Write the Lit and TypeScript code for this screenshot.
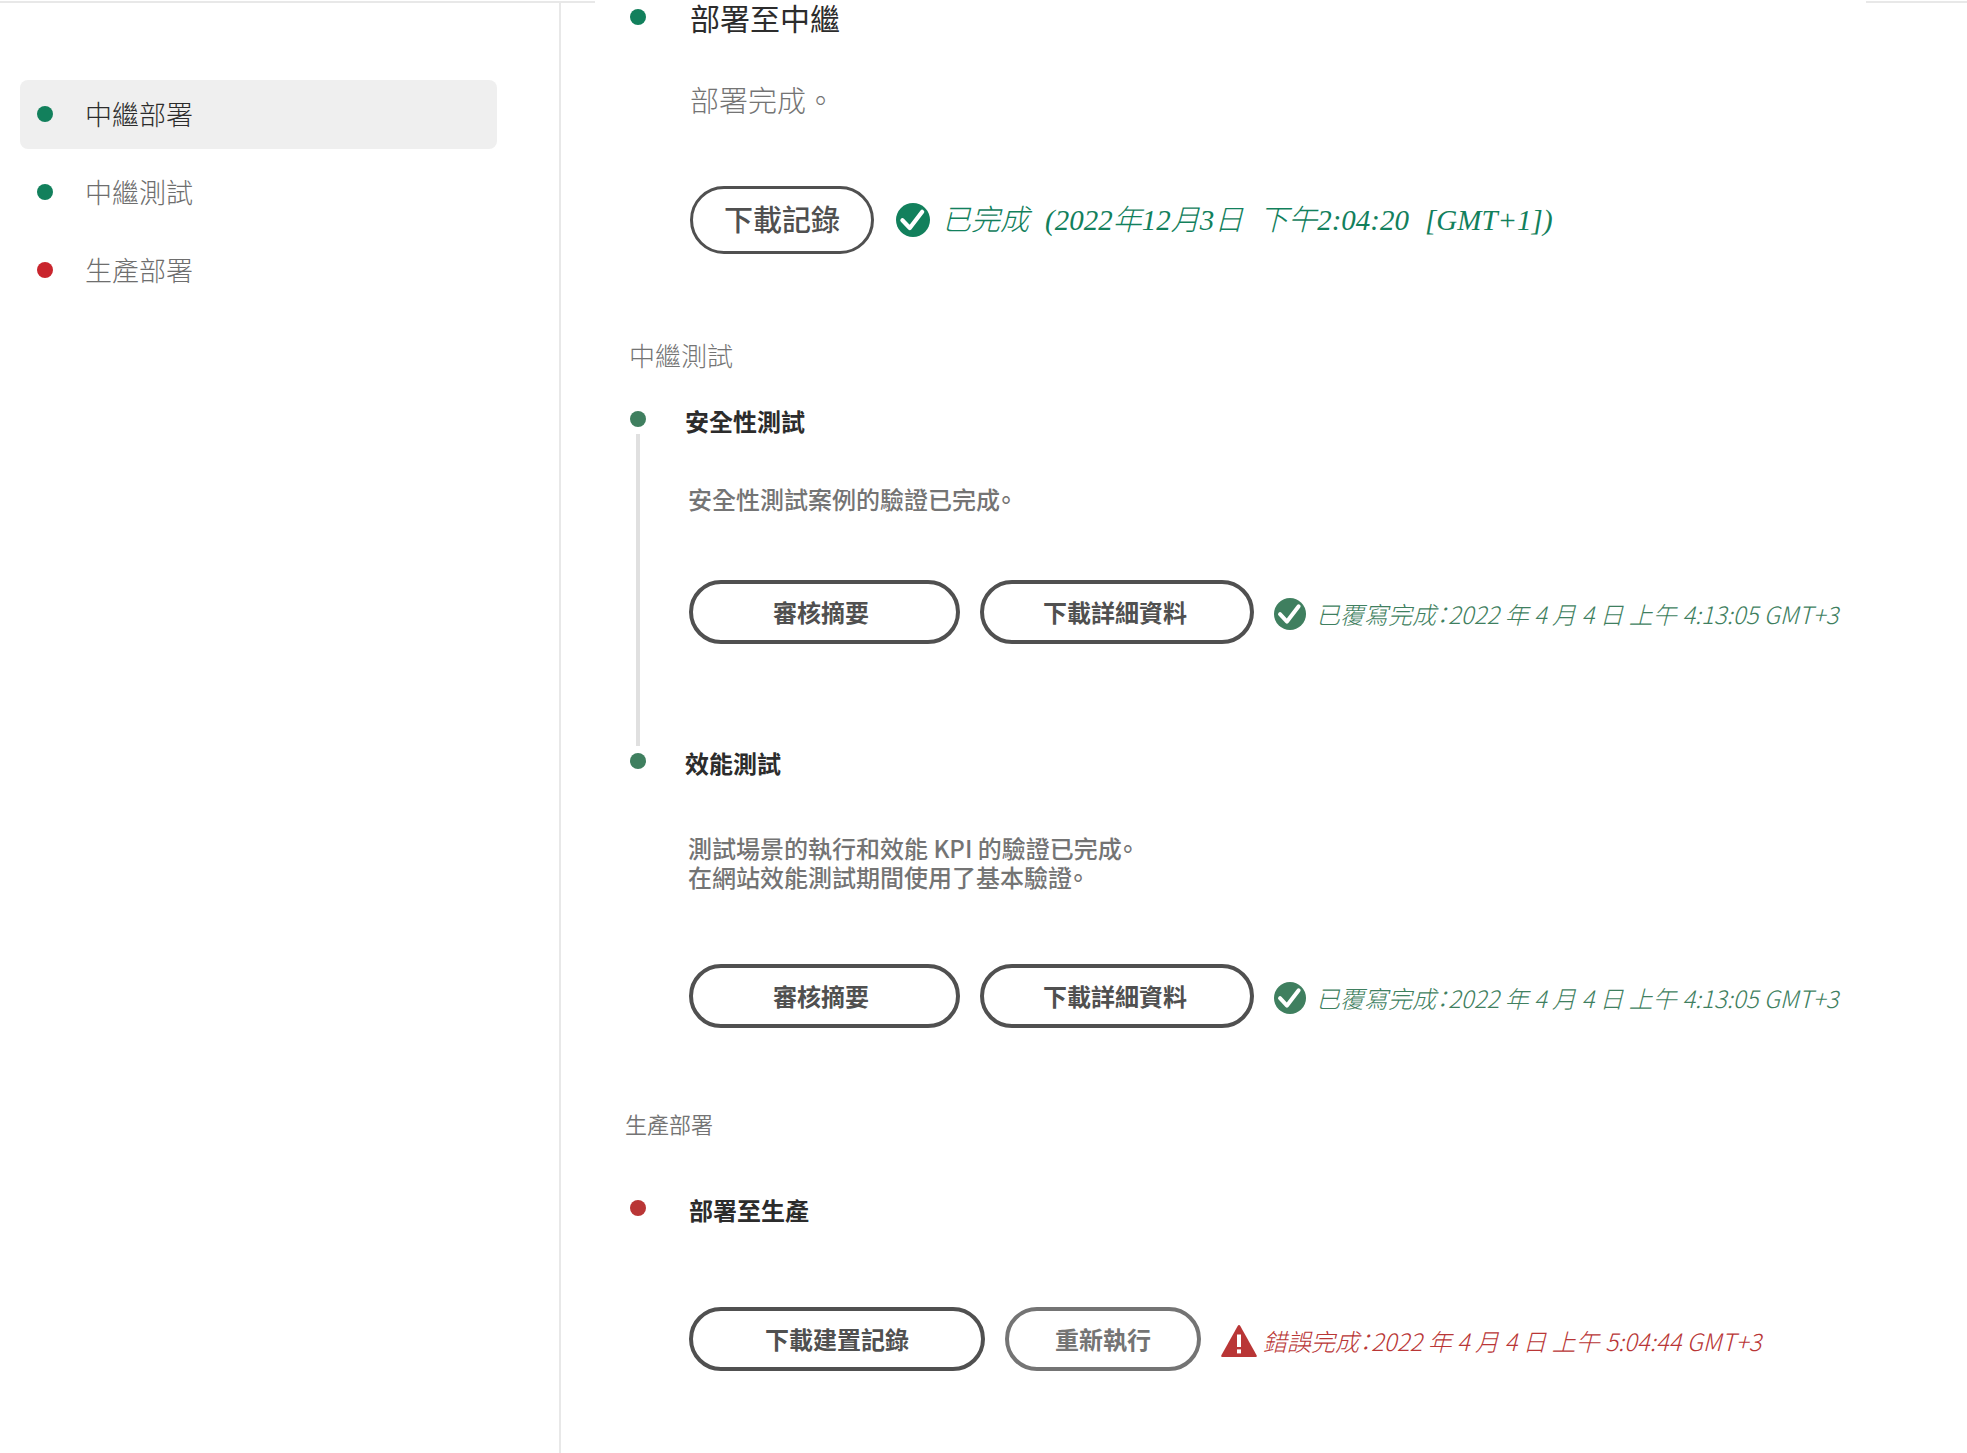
import { LitElement, html, css, nothing } from "lit";
import { customElement } from "lit/decorators.js";
import { classMap } from "lit/directives/class-map.js";

type Tone = "ok" | "error";

interface Action {
  label: string;
  size: "compact" | "summary" | "details" | "log" | "retry";
}

interface Step {
  title: string;
  lines: string[];
  actions: Action[];
  tone: Tone;
  status: string[];
}

interface Stage {
  id: string;
  name: string;
  tone: Tone;
  showHeading: boolean;
  steps: Step[];
}

const TEST_ACTIONS: Action[] = [
  { label: "審核摘要", size: "summary" },
  { label: "下載詳細資料", size: "details" },
];

const STAGES: Stage[] = [
  {
    id: "staging",
    name: "中繼部署",
    tone: "ok",
    showHeading: false,
    steps: [
      {
        title: "部署至中繼",
        lines: ["部署完成。"],
        actions: [{ label: "下載記錄", size: "compact" }],
        tone: "ok",
        status: ["已完成", "(2022年12月3日", "下午2:04:20", "[GMT+1])"],
      },
    ],
  },
  {
    id: "tests",
    name: "中繼測試",
    tone: "ok",
    showHeading: true,
    steps: [
      {
        title: "安全性測試",
        lines: ["安全性測試案例的驗證已完成。"],
        actions: TEST_ACTIONS,
        tone: "ok",
        status: ["已覆寫完成：2022 年 4 月 4 日 上午 4:13:05 GMT+3"],
      },
      {
        title: "效能測試",
        lines: ["測試場景的執行和效能 KPI 的驗證已完成。", "在網站效能測試期間使用了基本驗證。"],
        actions: TEST_ACTIONS,
        tone: "ok",
        status: ["已覆寫完成：2022 年 4 月 4 日 上午 4:13:05 GMT+3"],
      },
    ],
  },
  {
    id: "production",
    name: "生產部署",
    tone: "error",
    showHeading: true,
    steps: [
      {
        title: "部署至生產",
        lines: [],
        actions: [
          { label: "下載建置記錄", size: "log" },
          { label: "重新執行", size: "retry" },
        ],
        tone: "error",
        status: ["錯誤完成：2022 年 4 月 4 日 上午 5:04:44 GMT+3"],
      },
    ],
  },
];

const checkIcon = html`<svg class="icon" viewBox="0 0 34 34" aria-hidden="true">
  <circle cx="17" cy="17" r="17" fill="currentColor" />
  <path d="M6.4 17.2 L13.8 25 L26.2 8.8" fill="none" stroke="#fff" stroke-width="4.2" stroke-linecap="round" stroke-linejoin="round" />
</svg>`;

const alertIcon = html`<svg class="icon alert" viewBox="0 0 36 32" aria-hidden="true">
  <path d="M18 0 Q18.8 0 19.3 0.9 L35.6 30.3 Q36.3 32 34.8 32 H1.2 Q-0.3 32 0.4 30.3 L16.7 0.9 Q17.2 0 18 0 Z" fill="currentColor" />
  <rect x="16" y="9.5" width="4" height="12.5" fill="#fff" />
  <rect x="16" y="24.4" width="4" height="4" fill="#fff" />
</svg>`;

@customElement("app-root")
export class AppRoot extends LitElement {
  static styles = css`
    :host {
      display: flex;
      flex-direction: column;
      min-height: 100vh;
      background: #fff;
      color: #2c2c2c;
      font-family: "Noto Sans CJK TC", "Noto Sans", sans-serif;
      font-size: 24px;
      line-height: 32px;
      font-feature-settings: "halt" 1;
      --green: #3f7f5f;
      --red: #b93636;
      --line: #e8e8e8;
    }
    * {
      box-sizing: border-box;
    }
    h2, h3, p, ul {
      margin: 0;
      padding: 0;
      font-weight: inherit;
      font-size: inherit;
    }
    .top {
      display: flex;
      justify-content: space-between;
      padding-top: 1px;
    }
    .rule {
      height: 2px;
      background: var(--line);
    }
    .rule.start {
      width: 595px;
    }
    .rule.end {
      width: 101px;
    }
    .body {
      display: flex;
      flex: 1;
    }
    .side {
      flex: none;
      width: 561px;
      padding: 77px 62px 0 20px;
      border-right: 2px solid var(--line);
    }
    .nav {
      display: flex;
      flex-direction: column;
      gap: 9px;
      list-style: none;
    }
    .link {
      display: flex;
      align-items: center;
      gap: 32px;
      height: 69px;
      padding: 0 17px 2px;
      border-radius: 8px;
      color: #6e6e6e;
      font-size: 27px;
      font-weight: 300;
      text-decoration: none;
    }
    .link.current {
      background: #efefef;
      color: #2c2c2c;
    }
    .dot {
      flex: none;
      width: 16px;
      height: 16px;
      border-radius: 50%;
      background: var(--green);
    }
    .dot.error {
      background: var(--red);
    }
    .side, .staging {
      --green: #12805c;
      --red: #c9252d;
    }
    .main {
      flex: 1;
      min-width: 0;
      padding: 0 32px 82px 68px;
    }
    .heading {
      color: #747474;
      font-size: 26px;
      font-weight: 300;
    }
    .tests .heading {
      padding-top: 85px;
      margin-bottom: 35px;
    }
    .production .heading {
      padding-top: 79px;
      margin-bottom: 56px;
      font-size: 22px;
      font-weight: 350;
      margin-left: -4px;
    }
    .step {
      display: flex;
      gap: 40px;
    }
    .marker {
      display: flex;
      flex-direction: column;
      align-items: center;
      gap: 7px;
      width: 18px;
      padding: 5px 0 2px;
    }
    .rail {
      flex: 1;
      width: 4px;
      background: #e0e0e0;
    }
    .content {
      flex: 1;
      min-width: 0;
    }
    .title {
      margin-left: -2px;
      font-weight: 700;
      line-height: 30px;
    }
    .production .title {
      margin-left: 2px;
    }
    .text {
      margin-top: 48px;
      padding-left: 1px;
      color: #747474;
      font-weight: 500;
      line-height: 29px;
    }
    .actions {
      display: flex;
      align-items: center;
      flex-wrap: wrap;
      gap: 20px;
      margin-top: 67px;
      padding-left: 2px;
    }
    .linked {
      padding-bottom: 104px;
    }
    .long .text {
      margin-top: 55px;
    }
    .long .actions {
      margin-top: 73px;
    }
    .production .actions {
      margin-top: 82px;
    }
    .btn {
      height: 64px;
      border: 4px solid #505050;
      border-radius: 32px;
      background: #fff;
      color: #505050;
      font: inherit;
      font-weight: 700;
      line-height: 32px;
      white-space: nowrap;
      cursor: pointer;
    }
    .compact {
      padding: 0 31px 4px;
    }
    .summary {
      padding: 0 87px 0 80px;
    }
    .details {
      padding: 0 63px 0 59px;
    }
    .log {
      padding: 0 72px;
    }
    .retry {
      padding: 0 46px;
      border-color: #747474;
      color: #747474;
    }
    .status {
      display: flex;
      align-items: center;
      gap: 10px;
      padding-top: 4px;
      color: var(--green);
      font-weight: 300;
      font-style: italic;
    }
    .status.error {
      gap: 6px;
      color: var(--red);
    }
    .note {
      display: flex;
      flex-wrap: wrap;
      column-gap: 16px;
    }
    .icon {
      flex: none;
      width: 32px;
      height: 32px;
    }
    .icon.alert {
      width: 36px;
    }
    .staging .marker {
      padding-top: 6px;
    }
    .staging .content {
      padding-left: 1px;
    }
    .staging .title {
      margin-left: 2px;
      font-size: 30px;
      font-weight: 400;
      line-height: 28px;
    }
    .staging .text {
      margin-top: 50px;
      padding-left: 2px;
      font-size: 29px;
      font-weight: 300;
      line-height: 36px;
      font-feature-settings: normal;
    }
    .staging .actions {
      gap: 22px;
      margin-top: 69px;
    }
    .staging .btn {
      height: 68px;
      border-width: 3px;
      border-radius: 34px;
      font-size: 29px;
      font-weight: 500;
    }
    .staging .status {
      gap: 12px;
      padding-top: 0;
      font-family: "Liberation Serif", "Noto Sans CJK TC", serif;
      font-size: 29px;
    }
    .staging .icon {
      width: 34px;
      height: 34px;
    }
  `;

  private renderStep(step: Step, last: boolean) {
    return html`<article class=${classMap({ step: true, long: step.lines.length > 1 })}>
      <div class="marker">
        <span class="dot ${step.tone}"></span>
        ${last ? nothing : html`<span class="rail"></span>`}
      </div>
      <div class=${classMap({ content: true, linked: !last })}>
        <h3 class="title">${step.title}</h3>
        ${step.lines.length
          ? html`<div class="text">${step.lines.map((line) => html`<p>${line}</p>`)}</div>`
          : nothing}
        <div class="actions">
          ${step.actions.map(
            (action) => html`<button type="button" class="btn ${action.size}">${action.label}</button>`
          )}
          <div class="status ${step.tone}">
            ${step.tone === "ok" ? checkIcon : alertIcon}
            <span class="note">${step.status.map((part) => html`<span>${part}</span>`)}</span>
          </div>
        </div>
      </div>
    </article>`;
  }

  render() {
    return html`
      <div class="top"><span class="rule start"></span><span class="rule end"></span></div>
      <div class="body">
        <nav class="side">
          <ul class="nav">
            ${STAGES.map(
              (stage, i) => html`<li>
                <a class=${classMap({ link: true, current: i === 0 })} href="#${stage.id}">
                  <span class="dot ${stage.tone}"></span>${stage.name}
                </a>
              </li>`
            )}
          </ul>
        </nav>
        <main class="main">
          ${STAGES.map(
            (stage) => html`<section class="stage ${stage.id}" id=${stage.id}>
              ${stage.showHeading ? html`<h2 class="heading">${stage.name}</h2>` : nothing}
              ${stage.steps.map((step, i) => this.renderStep(step, i === stage.steps.length - 1))}
            </section>`
          )}
        </main>
      </div>
    `;
  }
}
